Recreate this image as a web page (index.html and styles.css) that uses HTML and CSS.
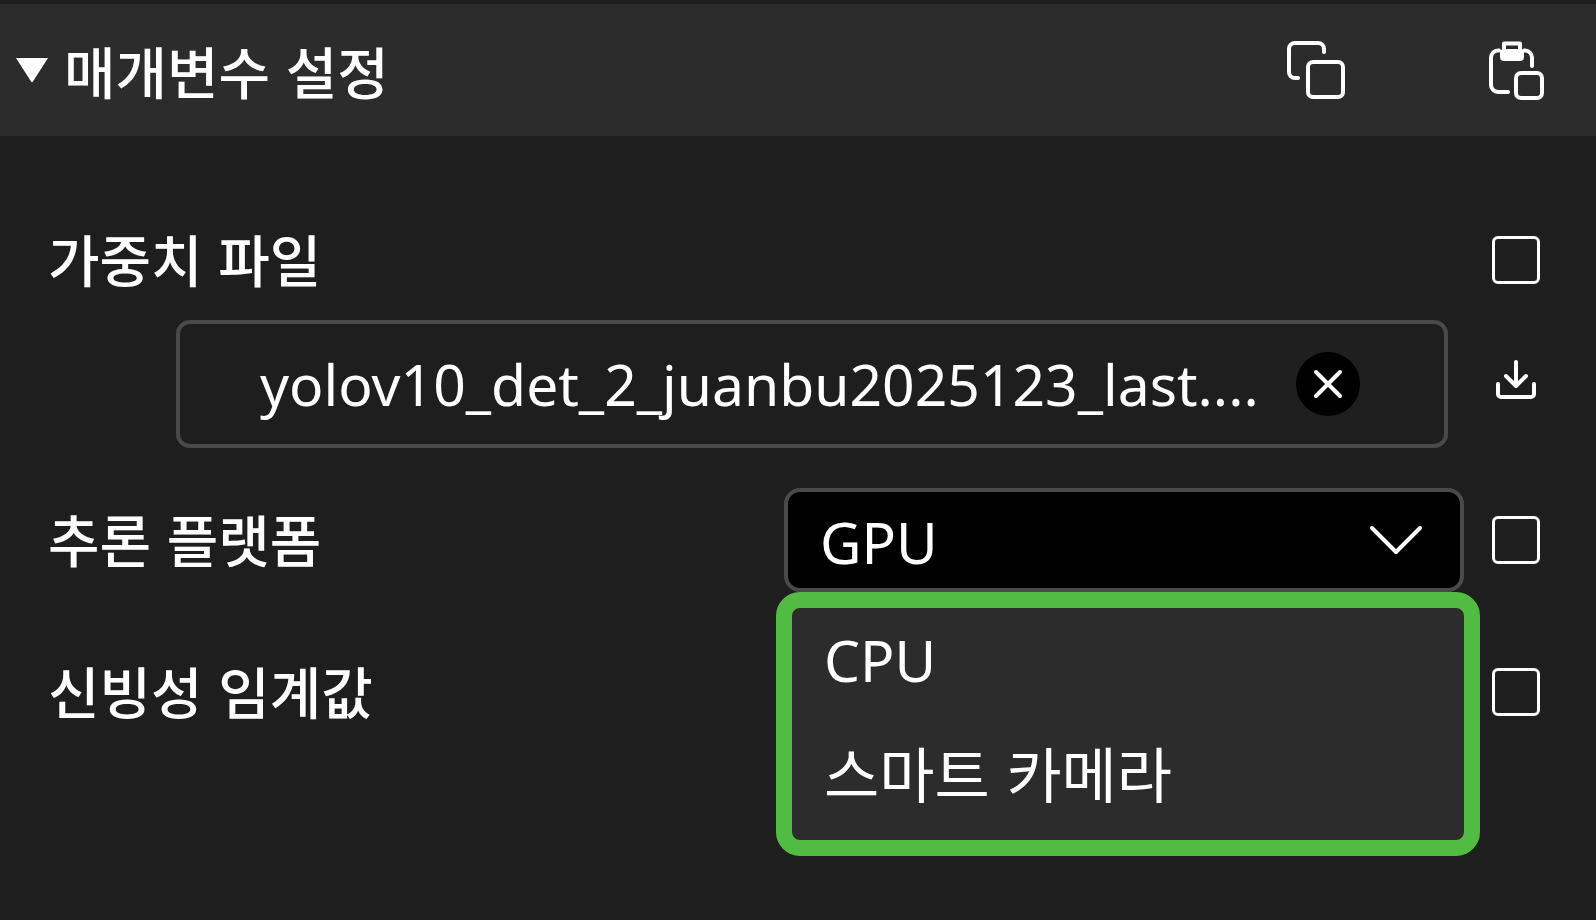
FILE: index.html
```html
<!DOCTYPE html>
<html lang="ko">
<head>
    <meta charset="UTF-8">
    <meta name="viewport" content="width=device-width, initial-scale=1.0">
    <title>매개변수 설정</title>
    <link rel="stylesheet" href="styles.css">
</head>
<body>

    <header class="panel-header">
        <svg class="arrow" viewBox="0 0 32 24" aria-hidden="true">
            <path d="M0 0h32L16 25z"/>
        </svg>
        <h2>매개변수 설정</h2>
        <div class="actions">
            <button type="button" class="icon-button" aria-label="복사">
                <svg viewBox="0 0 64 64">
                    <path d="M40 14V11a6 6 0 0 0-6-6H11a6 6 0 0 0-6 6v23a6 6 0 0 0 6 6h3"/>
                    <rect x="24" y="24" width="35" height="35" rx="5"/>
                </svg>
            </button>
            <button type="button" class="icon-button" aria-label="붙여넣기">
                <svg viewBox="0 0 64 64">
                    <path d="M15 12.500h-1a7 7 0 0 0-7 7V47a7 7 0 0 0 7 7h10M40 12.500h1a7 7 0 0 1 7 7V28"/>
                    <path d="M20 14V5.500h16V14"/>
                    <rect class="solid" x="16" y="11" width="24" height="12" rx="4"/>
                    <rect x="32" y="35" width="26" height="25" rx="5"/>
                </svg>
            </button>
        </div>
    </header>

    <form class="params">
        <div class="row">
            <label for="weightFile">가중치 파일</label>
            <input type="checkbox" class="check" aria-label="가중치 파일 선택">
        </div>

        <div class="row file-row">
            <div class="file-box">
                <input type="text" id="weightFile" value="yolov10_det_2_juanbu2025123_last...." readonly>
                <button type="button" class="clear-button" aria-label="지우기">
                    <svg viewBox="0 0 64 64">
                        <path d="M20 20l24 24M44 20L20 44"/>
                    </svg>
                </button>
            </div>
            <button type="button" class="download-button" aria-label="다운로드">
                <svg viewBox="0 0 48 48">
                    <path d="M24 2v23M14 16l10 10 10-10M6 24v10a3 3 0 0 0 3 3h30a3 3 0 0 0 3-3V24"/>
                </svg>
            </button>
        </div>

        <div class="row platform-row">
            <label for="platform">추론 플랫폼</label>
            <div class="select-box">
                <select id="platform">
                    <option selected>GPU</option>
                    <option>CPU</option>
                    <option>스마트 카메라</option>
                </select>
                <svg class="chevron" viewBox="0 0 56 32" aria-hidden="true">
                    <path d="M4 4l24 24L52 4"/>
                </svg>
                <ul class="menu">
                    <li>CPU</li>
                    <li>스마트 카메라</li>
                </ul>
            </div>
            <input type="checkbox" class="check" aria-label="추론 플랫폼 선택">
        </div>

        <div class="row">
            <label for="threshold">신빙성 임계값</label>
            <input type="checkbox" class="check" id="threshold">
        </div>
    </form>

</body>
</html>
```
FILE: styles.css
```css
* {
    box-sizing: border-box;
}

body {
    margin: 0;
    min-height: 100vh;
    background-color: #1e1e1e;
    color: white;
    font-family: "Noto Sans", "Noto Sans CJK KR", sans-serif;
    font-size: 57px;
}

button, input, select {
    margin: 0;
    padding: 0;
    border: none;
    background: none;
    color: inherit;
    font: inherit;
}

button {
    cursor: pointer;
}

svg {
    display: block;
    fill: none;
    stroke: white;
    stroke-width: 4;
    stroke-linecap: round;
    stroke-linejoin: round;
}

.panel-header {
    display: flex;
    align-items: center;
    gap: 16px;
    height: 136px;
    padding: 0 48px 0 16px;
    border-top: 4px solid #1e1e1e;
    background-color: #2c2c2c;
}

.arrow {
    width: 32px;
    height: 24px;
    fill: white;
    stroke: none;
}

h2, label {
    flex: 1;
    margin: 0;
    font-family: "Noto Sans CJK KR", sans-serif;
    font-size: 56px;
    font-weight: 500;
    line-height: 80px;
}

label {
    padding-bottom: 4px;
    line-height: 76px;
}

.actions {
    display: flex;
    gap: 136px;
}

.icon-button {
    width: 64px;
    height: 64px;
}

.icon-button .solid {
    fill: white;
    stroke: none;
}

.params {
    padding: 84px 56px 0 48px;
}

.row {
    display: flex;
    align-items: center;
}

.check {
    appearance: none;
    width: 48px;
    height: 48px;
    border: 3px solid white;
    border-radius: 6px;
}

.file-row {
    gap: 44px;
    margin: 20px 0 40px;
    padding-left: 128px;
}

.file-box {
    flex: 1;
    display: flex;
    align-items: center;
    gap: 16px;
    height: 128px;
    padding: 0 84px 0 80px;
    border: 4px solid #4a4a4a;
    border-radius: 14px;
}

.file-box input {
    flex: 1;
    min-width: 0;
    height: 80px;
}

.clear-button {
    width: 64px;
    height: 64px;
    border-radius: 50%;
    background-color: black;
}

.download-button {
    width: 48px;
    height: 48px;
}

.platform-row {
    gap: 28px;
    margin-bottom: 60px;
}

.select-box {
    position: relative;
    width: calc(50% - 66px);
}

.select-box select {
    display: block;
    appearance: none;
    width: 100%;
    height: 104px;
    padding: 4px 32px 0;
    border: 4px solid #4a4a4a;
    border-radius: 16px;
    background-color: black;
}

.chevron {
    position: absolute;
    top: 36px;
    right: 40px;
    width: 56px;
    height: 32px;
    pointer-events: none;
}

/* open list hangs just below the select */
.menu {
    position: absolute;
    top: 104px;
    left: -8px;
    right: -16px;
    margin: 0;
    padding: 0 32px 16px;
    border: 16px solid #52bb43;
    border-radius: 24px;
    background-color: #2c2c2c;
    list-style: none;
}

.menu li {
    line-height: 104px;
}

.menu li:last-child {
    margin-top: 8px;
    font-family: "Noto Sans CJK KR", sans-serif;
    font-size: 60px;
}
```
